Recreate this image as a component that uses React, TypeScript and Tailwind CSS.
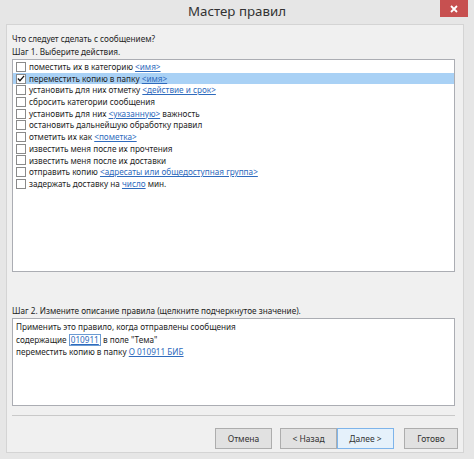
import React from 'react';

type Part = { t: string; link?: boolean };

const actions: { parts: Part[]; checked?: boolean }[] = [
  { parts: [{ t: 'поместить их в категорию ' }, { t: '<имя>', link: true }] },
  { parts: [{ t: 'переместить копию в папку ' }, { t: '<имя>', link: true }], checked: true },
  { parts: [{ t: 'установить для них отметку ' }, { t: '<действие и срок>', link: true }] },
  { parts: [{ t: 'сбросить категории сообщения' }] },
  { parts: [{ t: 'установить для них ' }, { t: '<указанную>', link: true }, { t: ' важность' }] },
  { parts: [{ t: 'остановить дальнейшую обработку правил' }] },
  { parts: [{ t: 'отметить их как ' }, { t: '<пометка>', link: true }] },
  { parts: [{ t: 'известить меня после их прочтения' }] },
  { parts: [{ t: 'известить меня после их доставки' }] },
  { parts: [{ t: 'отправить копию ' }, { t: '<адресаты или общедоступная группа>', link: true }] },
  { parts: [{ t: 'задержать доставку на ' }, { t: 'число', link: true }, { t: ' мин.' }] },
];

const Check = ({ checked }: { checked?: boolean }) => (
  <span className="mr-[3px] flex h-[10px] w-[10px] shrink-0 items-center justify-center border border-[#8a8a8a] bg-white">
    {checked && (
      <svg width="9" height="9" viewBox="0 0 9 9">
        <path d="M1 4.5 L3.3 7 L8 1.5" fill="none" stroke="#111" strokeWidth="1.4" />
      </svg>
    )}
  </span>
);

const Btn = ({ label, active }: { label: string; active?: boolean }) => (
  <button
    className={`flex h-[21px] w-full items-center justify-center border text-[8.5px] text-[#333] ${
      active ? 'border-[#7eb4ea] bg-[#e5f1fb]' : 'border-[#adadad] bg-[#e1e1e1]'
    }`}
  >
    {label}
  </button>
);

export default function App() {
  return (
    <div
      className="flex h-[459px] w-[474px] flex-col bg-[#e6e6e6] text-[#1e1e1e]"
      style={{ fontFamily: '"Noto Sans", "Open Sans", sans-serif' }}
    >
      <div className="relative flex h-[24px] shrink-0 items-center justify-center">
        <span className="text-[13.3px] text-[#333]">Мастер правил</span>
        <div className="absolute right-[6px] top-0 flex h-[17px] w-[28px] items-center justify-center bg-[#c75050]">
          <svg width="8" height="8" viewBox="0 0 8 8">
            <path d="M1 1 L7 7 M7 1 L1 7" stroke="#fff" strokeWidth="1.8" />
          </svg>
        </div>
      </div>

      <div className="mb-[6px] ml-[6px] mr-[10px] flex flex-1 flex-col border border-[#d4d4d4] bg-[#f0f0f0] pl-[5px] pr-[8px] pt-[7px] text-[8.2px] leading-[13px]">
        <div>Что следует сделать с сообщением?</div>
        <div>Шаг 1. Выберите действия.</div>
        <div className="mt-[1px] flex h-[213px] flex-col border border-[#abadb3] bg-white pt-[1px]">
          {actions.map((a, i) => (
            <div
              key={i}
              className={`flex h-[11.7px] items-center pl-[3px] leading-[11.7px] ${a.checked ? 'bg-[#a9d1f5]' : ''}`}
            >
              <Check checked={a.checked} />
              <span className="whitespace-nowrap">
                {a.parts.map((p, j) =>
                  p.link ? (
                    <span key={j} className="text-[#2f6bbd] underline">
                      {p.t}
                    </span>
                  ) : (
                    <span key={j}>{p.t.replace(/ /g, '\u00a0')}</span>
                  )
                )}
              </span>
            </div>
          ))}
        </div>

        <div className="mt-[32px]">Шаг 2. Измените описание правила (щелкните подчеркнутое значение).</div>
        <div className="mt-[1px] h-[88px] border border-[#abadb3] bg-white px-[3px] pt-[2px] leading-[12.5px]">
          <div>Применить это правило, когда отправлены сообщения</div>
          <div className="flex items-center">
            <span>содержащие&nbsp;</span>
            <span className="border border-[#6b9bd2] px-[1px] leading-[10px] text-[#2f6bbd] underline">010911</span>
            <span>&nbsp;в поле "Тема"</span>
          </div>
          <div>
            переместить копию в папку <span className="text-[#2f6bbd] underline">О 010911 БИБ</span>
          </div>
        </div>

        <div className="mt-[9px] border-t border-[#c9c9c9]" />

        <div className="mt-[12px] flex justify-end">
          <div className="w-[57px]">
            <Btn label="Отмена" />
          </div>
          <div className="ml-[8px] w-[57px]">
            <Btn label="< Назад" />
          </div>
          <div className="w-[57px]">
            <Btn label="Далее >" active />
          </div>
          <div className="ml-[10px] mr-[-3px] w-[54px]">
            <Btn label="Готово" />
          </div>
        </div>
      </div>
    </div>
  );
}
